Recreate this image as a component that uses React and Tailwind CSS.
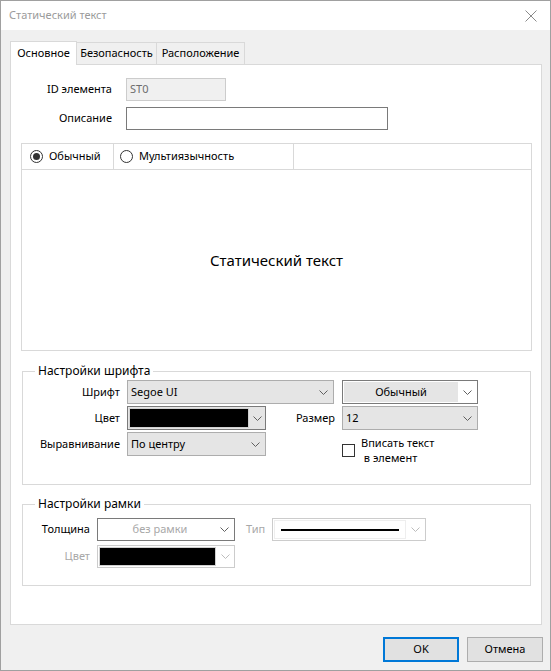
import React from 'react';

const font = { fontFamily: '"Noto Sans", "Open Sans", sans-serif' };

function Chevron({ muted }) {
  return (
    <svg width="9" height="5" viewBox="0 0 9 5" className="shrink-0">
      <path d="M0.5 0.5 L4.5 4.5 L8.5 0.5" fill="none" stroke={muted ? '#bcbcbc' : '#606060'} strokeWidth="1" />
    </svg>
  );
}

function Combo({ width, children, className = '' }) {
  return (
    <div className={`flex items-center h-[24px] border border-[#adadad] bg-[#e5e5e5] ${className}`} style={{ width }}>
      <div className="flex-1 px-[3px] text-[11px] text-black truncate">{children}</div>
      <div className="w-[20px] flex justify-center">
        <Chevron />
      </div>
    </div>
  );
}

function Radio({ checked, label }) {
  return (
    <div className="flex items-center gap-[6px]">
      <span className="w-[13px] h-[13px] rounded-full border border-[#333] bg-white flex items-center justify-center">
        {checked && <span className="w-[7px] h-[7px] rounded-full bg-[#333]" />}
      </span>
      <span className="text-[11px] text-black">{label}</span>
    </div>
  );
}

function App() {
  return (
    <div style={font} className="w-[551px] h-[671px] border border-[#a0a0a0] bg-[#f0f0f0] flex flex-col text-[11px]">
      {/* title bar */}
      <div className="h-[29px] bg-white flex items-center justify-between pl-[8px] pr-[13px] shrink-0">
        <span className="text-[11px] text-[#9b9b9b]">Статический текст</span>
        <svg width="12" height="12" viewBox="0 0 12 12">
          <path d="M0.5 0.5 L11.5 11.5 M11.5 0.5 L0.5 11.5" stroke="#8a8a8a" strokeWidth="1" />
        </svg>
      </div>

      <div className="pl-[9px] pr-[8px] pt-[10px]">
        {/* tabs */}
        <div className="flex items-end h-[24px]">
          <div className="relative z-10 -mb-px w-[67px] h-[24px] bg-white border border-b-0 border-[#d9d9d9] flex items-center justify-center text-black">
            Основное
          </div>
          <div className="w-[80px] h-[22px] bg-[#f0f0f0] border border-l-0 border-b-0 border-[#d9d9d9] flex items-center justify-center text-black">
            Безопасность
          </div>
          <div className="w-[88px] h-[22px] bg-[#f0f0f0] border border-l-0 border-b-0 border-[#d9d9d9] flex items-center justify-center text-black">
            Расположение
          </div>
        </div>

        {/* tab page */}
        <div className="h-[561px] border border-[#d9d9d9] bg-white pt-[13px] px-[11px]">
          <div className="flex items-center h-[23px]">
            <span className="w-[90px] text-right text-black">ID элемента</span>
            <div className="ml-[14px] w-[100px] h-[23px] border border-[#cccccc] bg-[#f0f0f0] flex items-center px-[3px] text-[#6d6d6d]">
              ST0
            </div>
          </div>
          <div className="flex items-center h-[23px] mt-[6px]">
            <span className="w-[90px] text-right text-black">Описание</span>
            <div className="ml-[14px] w-[262px] h-[23px] border border-[#7a7a7a] bg-white" />
          </div>

          {/* text content box */}
          <div className="mt-[13px] -ml-px w-[511px] h-[208px] border border-[#d9d9d9] flex flex-col">
            <div className="flex h-[26px] border-b border-[#d9d9d9] shrink-0">
              <div className="w-[92px] border-r border-[#d9d9d9] flex items-center pl-[8px]">
                <Radio checked label="Обычный" />
              </div>
              <div className="w-[180px] border-r border-[#d9d9d9] flex items-center pl-[6px]">
                <Radio label="Мультиязычность" />
              </div>
            </div>
            <div className="flex-1 flex items-center justify-center">
              <span className="text-[15px] text-black">Статический текст</span>
            </div>
          </div>

          {/* font settings */}
          <fieldset className="mt-[12px] w-[509px] h-[122px] border border-[#d9d9d9] px-0">
            <legend className="ml-[12px] px-[3px] text-[12px] text-black leading-[16px]">Настройки шрифта</legend>
            <div className="flex mt-[1px]">
              <div className="flex flex-col gap-[2px]">
                <div className="flex items-center">
                  <span className="w-[104px] text-right pr-[7px]">Шрифт</span>
                  <Combo width={207}>Segoe UI</Combo>
                </div>
                <div className="flex items-center">
                  <span className="w-[104px] text-right pr-[7px]">Цвет</span>
                  <div className="w-[139px] h-[24px] border border-[#7a7a7a] bg-[#e5e5e5] flex items-center">
                    <div className="ml-[1px] w-[120px] h-[20px] border border-[#d0d0d0] bg-black" />
                    <div className="flex-1 flex justify-center">
                      <Chevron />
                    </div>
                  </div>
                </div>
                <div className="flex items-center">
                  <span className="w-[104px] text-right pr-[7px]">Выравнивание</span>
                  <Combo width={139}>По центру</Combo>
                </div>
              </div>
              <div className="ml-[8px] flex flex-col gap-[2px]">
                <div className="w-[136px] h-[24px] border border-[#7a7a7a] bg-white flex items-center">
                  <div className="ml-[1px] w-[114px] h-[20px] bg-[#e5e5e5] flex items-center justify-center">Обычный</div>
                  <div className="flex-1 flex justify-center">
                    <Chevron />
                  </div>
                </div>
                <div className="-ml-[55px] flex items-center">
                  <span className="w-[55px] text-right pr-[7px]">Размер</span>
                  <Combo width={136}>12</Combo>
                </div>
                <div className="flex items-center mt-[3px]">
                  <span className="w-[13px] h-[13px] border border-[#333] bg-white shrink-0" />
                  <span className="ml-[6px] leading-[15px]">
                    Вписать текст
                    <br />
                    &nbsp;в элемент
                  </span>
                </div>
              </div>
            </div>
          </fieldset>

          {/* border settings */}
          <fieldset className="mt-[11px] w-[509px] h-[90px] border border-[#d9d9d9] px-0">
            <legend className="ml-[12px] px-[3px] text-[12px] text-black leading-[16px]">Настройки рамки</legend>
            <div className="flex flex-col gap-[4px] mt-[6px]">
              <div className="flex items-center">
                <span className="w-[74px] text-right pr-[7px] text-black">Толщина</span>
                <div className="w-[138px] h-[23px] border border-[#7a7a7a] bg-white flex items-center">
                  <span className="flex-1 text-center text-[#a8a8a8] pl-[8px]">без рамки</span>
                  <div className="w-[20px] flex justify-center">
                    <Chevron />
                  </div>
                </div>
                <span className="ml-[11px] text-[#a8a8a8]">Тип</span>
                <div className="ml-[7px] w-[154px] h-[23px] border border-[#cccccc] bg-white flex items-center">
                  <div className="ml-[1px] w-[132px] h-[19px] border border-[#eeeeee] flex items-center px-[6px]">
                    <div className="w-full h-[2px] bg-black" />
                  </div>
                  <div className="flex-1 flex justify-center">
                    <Chevron muted />
                  </div>
                </div>
              </div>
              <div className="flex items-center">
                <span className="w-[74px] text-right pr-[7px] text-[#a8a8a8]">Цвет</span>
                <div className="w-[138px] h-[23px] border border-[#cccccc] bg-white flex items-center">
                  <div className="ml-[1px] w-[117px] h-[19px] border border-[#d0d0d0] bg-black" />
                  <div className="flex-1 flex justify-center">
                    <Chevron muted />
                  </div>
                </div>
              </div>
            </div>
          </fieldset>
        </div>
      </div>

      {/* buttons */}
      <div className="flex justify-end gap-[8px] pr-[7px] mt-[12px]">
        <button className="w-[76px] h-[25px] border-2 border-[#0078d7] bg-[#e1e1e1] text-[11px] text-black">OK</button>
        <button className="w-[76px] h-[25px] border border-[#adadad] bg-[#e1e1e1] text-[11px] text-black">Отмена</button>
      </div>
    </div>
  );
}

export default App;
